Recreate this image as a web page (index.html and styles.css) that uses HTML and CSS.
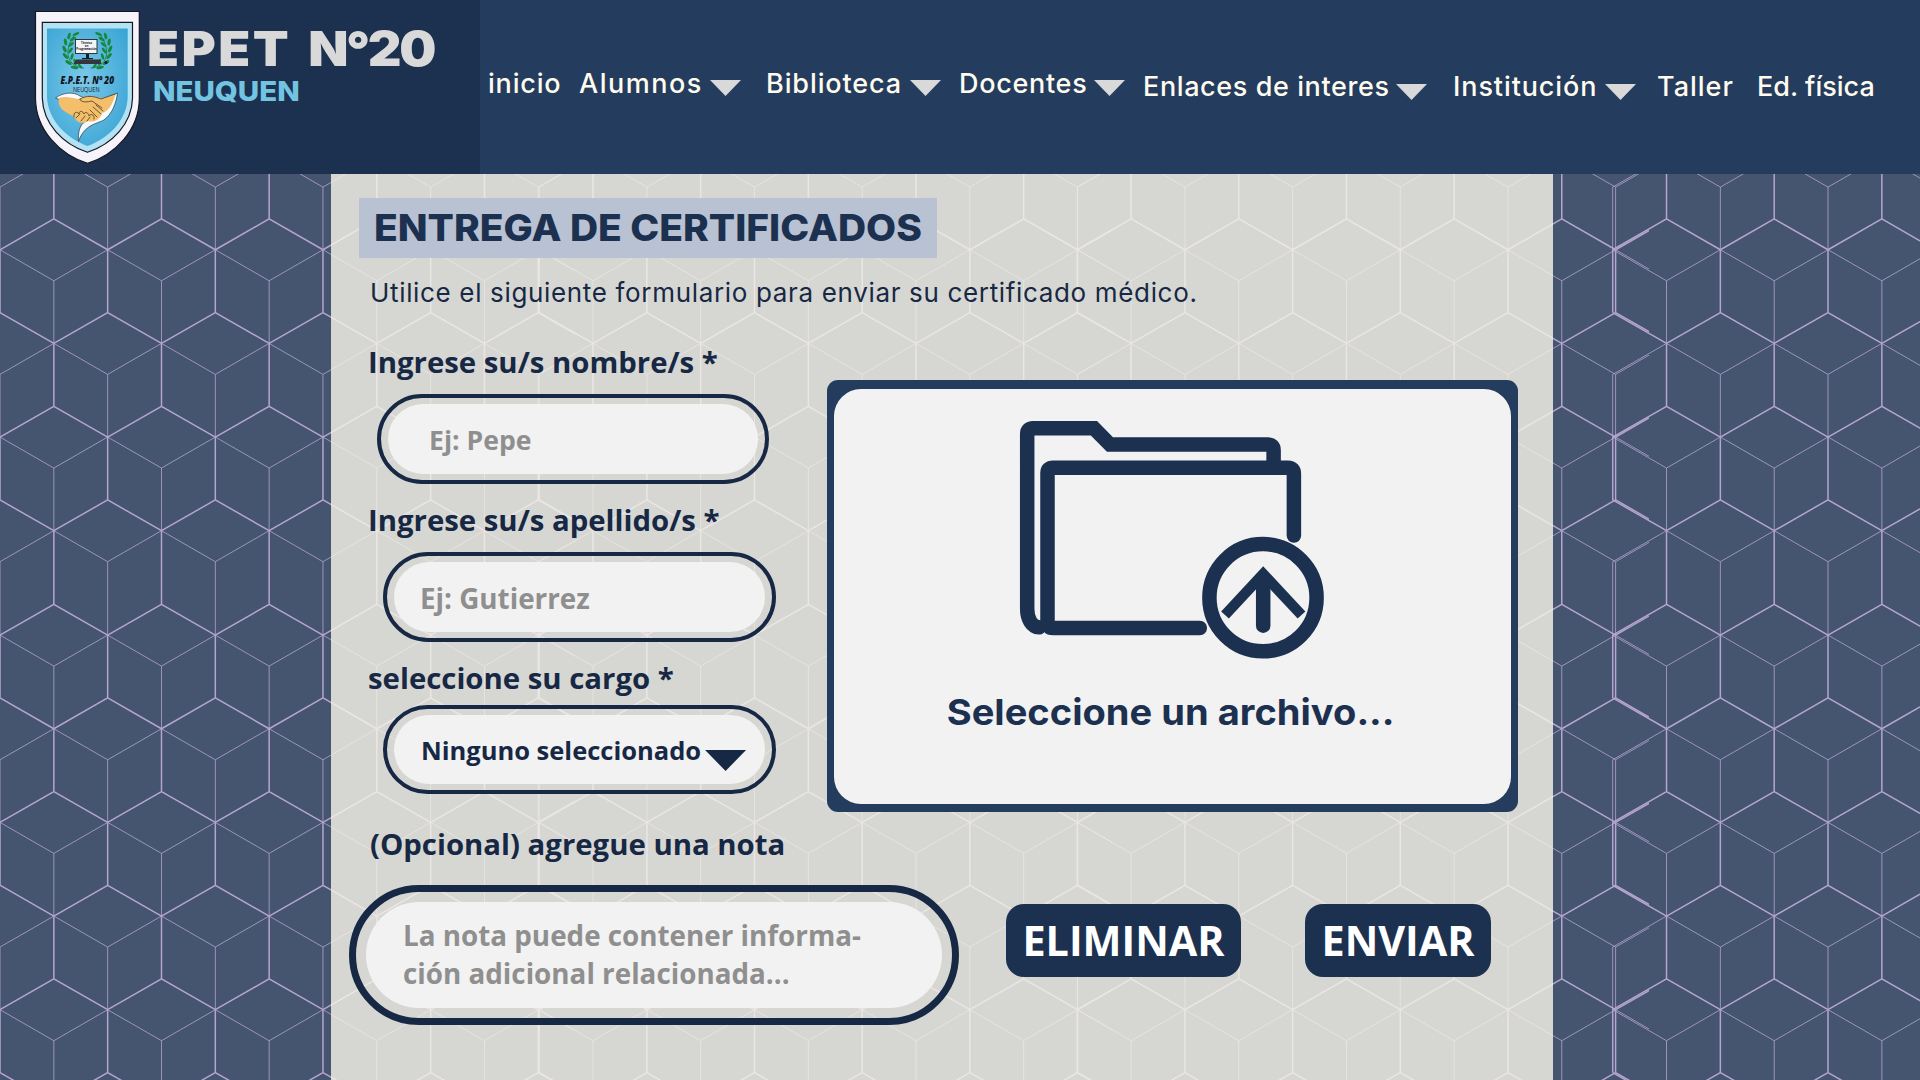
FILE: index.html
```html
<!DOCTYPE html>
<html lang="es">
<head>
<meta charset="utf-8">
<title>EPET N°20 Neuquén - Entrega de certificados</title>
<link rel="stylesheet" href="styles.css">
</head>
<body>
<svg class="backdrop" viewBox="0 0 1920 1080" aria-hidden="true"></svg>
<header class="header">
  <div class="brand">
    <svg class="crest" viewBox="30 6 115 162">
      <defs>
        <radialGradient id="sky" cx=".45" cy=".45" r=".7">
          <stop offset="0" stop-color="#7cc9ea"/><stop offset="1" stop-color="#37a3d3"/>
        </radialGradient>
        <g id="branch" fill="#158a3c">
          <path d="M84 68C68 67 62 52 75 34" fill="none" stroke="#1f7a3c" stroke-width=".9"/>
          <ellipse cx="76" cy="34" rx="3.6" ry="1.4" transform="rotate(-25 76 34)"/>
          <ellipse cx="69" cy="36" rx="3.4" ry="1.5" transform="rotate(-75 69 36)"/>
          <ellipse cx="73" cy="39" rx="3.4" ry="1.4" transform="rotate(-30 73 39)"/>
          <ellipse cx="65.500" cy="42" rx="3.600" ry="1.600" transform="rotate(80 65.500 42)"/>
          <ellipse cx="71" cy="44.500" rx="3.400" ry="1.400" transform="rotate(-40 71 44.500)"/>
          <ellipse cx="64.500" cy="49" rx="3.600" ry="1.600" transform="rotate(65 64.500 49)"/>
          <ellipse cx="70.500" cy="50.500" rx="3.400" ry="1.400" transform="rotate(-55 70.500 50.500)"/>
          <ellipse cx="65.500" cy="56" rx="3.700" ry="1.600" transform="rotate(50 65.500 56)"/>
          <ellipse cx="72" cy="56.500" rx="3.400" ry="1.400" transform="rotate(-75 72 56.500)"/>
          <ellipse cx="68.500" cy="62.500" rx="3.700" ry="1.600" transform="rotate(35 68.500 62.500)"/>
          <ellipse cx="75" cy="62" rx="3.400" ry="1.400" transform="rotate(75 75 62)"/>
          <ellipse cx="74.500" cy="67.500" rx="3.800" ry="1.600" transform="rotate(10 74.500 67.500)"/>
          <ellipse cx="80" cy="66" rx="3" ry="1.300" transform="rotate(50 80 66)"/>
        </g>
      </defs>
      <path d="M35.500 11.500H139.300V99C139 130 115 155 87.600 163.300C60 155 36 130 35.500 99Z" fill="#f6f3fb" stroke="#15181f" stroke-width="1.200"/>
      <path d="M42.300 22.300H132.500V98C132 124 112 144 87.500 152.300C63 144 43 124 42.300 98Z" fill="#b4e2f5" stroke="#15181f" stroke-width="1.200"/>
      <path d="M47 28.500H127.700V97C127 120 109 138 87.500 146C66 138 48 120 47 97Z" fill="url(#sky)"/>
      <use href="#branch"/>
      <use href="#branch" transform="translate(174.600 0) scale(-1 1)"/>
      <rect x="75.500" y="39.500" width="21.500" height="14" fill="#f4f4f6" stroke="#22252b" stroke-width=".9"/>
      <path d="M86 54h3v4h4v1.200H82V58h4Z" fill="#1c1c22"/>
      <path d="M76 59.500H100l1.500 4.500H73.500Z" fill="#35353d"/>
      <circle cx="106" cy="62.500" r="1.600" fill="#1c1c22"/>
      <g class="crest-screen"><text x="86.500" y="43.700">Técnico</text><text x="86.500" y="46.900">en</text><text x="86.500" y="50.100">Programación</text></g>
      <text class="crest-name" x="60.500" y="83.500" textLength="53.500" lengthAdjust="spacingAndGlyphs">E.P.E.T. Nº 20</text>
      <text class="crest-city" x="73" y="92" textLength="26.500" lengthAdjust="spacingAndGlyphs">NEUQUEN</text>
      <path d="M55.500 98C62 93 73 91 80 96L97 104 117.500 93C116 104 112 114 104 120C96 124 84 125 78.500 141.500C78 133 79 125 86 121L70 104Z" fill="#f7fbff" stroke="#2b3a44" stroke-width=".7"/>
      <path d="M59 98C66 95 74 99 80 99C87 94 94 97 102 98C106 98 110 96 115.500 94C113 104 108 112 102 113C100 120 94 123 88 121C83 125 76 122 74 117C67 112 57 110 59 98Z" fill="#f4bf6b"/>
      <path d="M80 99C87 95 93 96 101 99L115 94M80 99C80 103 88 102 92 101L102 108M74 117C73 112 77 111 79 114C79 110 83 111 84 114C85 111 89 113 89 116C91 113 95 115 94 119M76 118L80 114M81 121L85 116M87 121L90 117M93 107L101 114M90 110L97 117M96 105L103 111" fill="none" stroke="#4c371f" stroke-width=".8" stroke-linecap="round"/>
    </svg>
    <div class="brand-text">
      <div class="brand-name">EPET <span class="number">N°20</span></div>
      <div class="brand-city">NEUQUEN</div>
    </div>
  </div>
  <nav class="nav">
    <a class="item inicio">inicio</a>
    <a class="item alumnos">Alumnos<i class="caret"></i></a>
    <a class="item biblioteca">Biblioteca<i class="caret"></i></a>
    <a class="item docentes">Docentes<i class="caret"></i></a>
    <a class="item low enlaces">Enlaces de interes<i class="caret"></i></a>
    <a class="item low institucion">Institución<i class="caret"></i></a>
    <a class="item low taller">Taller</a>
    <a class="item low">Ed. física</a>
  </nav>
</header>
<main class="panel">
  <h1 class="title"><span>ENTREGA DE CERTIFICADOS</span></h1>
  <p class="intro">Utilice el siguiente formulario para enviar su certificado médico.</p>
  <div class="columns">
    <div class="fields">
      <div class="label">Ingrese su/s nombre/s *</div>
      <div class="field first"><div class="fill">Ej: Pepe</div></div>
      <div class="label second">Ingrese su/s apellido/s *</div>
      <div class="field surname"><div class="fill">Ej: Gutierrez</div></div>
      <div class="label third">seleccione su cargo *</div>
      <div class="field select"><div class="fill">Ninguno seleccionado<i class="arrow"></i></div></div>
    </div>
    <div class="upload">
      <div class="drop">
        <svg class="folder" viewBox="1015 416 314 248" fill="none" stroke="#1c3050" stroke-width="14.500">
          <path d="M1039 627.300C1032 627 1027.200 619 1027.200 609V434Q1027.200 428.300 1033 428.300H1094L1110 444.600H1268Q1273.600 444.600 1273.600 450V464" stroke-linecap="round"/>
          <path d="M1199.800 628H1053Q1047.500 628 1047.500 622V473Q1047.500 467.700 1053 467.700H1288Q1293.900 467.700 1293.900 474V535.500" stroke-linecap="round"/>
          <circle cx="1263" cy="597.700" r="53.600"/>
          <path d="M1263.200 578V625.700" stroke-linecap="round"/>
          <path d="M1225 615L1263.200 574L1301.500 615" stroke-width="10.500"/>
        </svg>
        <div class="drop-text">Seleccione un archivo...</div>
      </div>
    </div>
  </div>
  <div class="label note-label">(Opcional) agregue una nota</div>
  <div class="bottom">
    <div class="note"><div class="fill">La nota puede contener informa-<br>ción adicional relacionada...</div></div>
    <button class="btn remove">ELIMINAR</button>
    <button class="btn send">ENVIAR</button>
  </div>
</main>
<script src="script.js"></script>
</body>
</html>
```
FILE: styles.css
```css
* { box-sizing: border-box; }

body {
  margin: 0;
  width: 1920px;
  height: 1080px;
  overflow: hidden;
  position: relative;
  background: #45546f;
  font-family: "Open Sans", "Noto Sans", sans-serif;
  color: #172845;
}

.backdrop {
  position: absolute;
  inset: 0;
  width: 1920px;
  height: 1080px;
  fill: none;
  stroke: #b5a5cf;
}
.backdrop .strong { stroke-width: 1.5; }
.backdrop .soft { stroke-width: .8; }

/* header */
.header {
  position: relative;
  display: flex;
  height: 174px;
  background: #243c5e;
  font-family: Inter, sans-serif;
}
.brand {
  display: flex;
  width: 480px;
  padding: 6px 0 0 30px;
  background: #1c3050;
}
.crest { width: 115px; height: 162px; flex: none; }
.crest text { font-family: "Open Sans", sans-serif; fill: #11151c; }
.crest .crest-name { font-size: 11px; font-weight: 800; font-style: italic; }
.crest .crest-city { font-size: 7.500px; font-weight: 500; }
.crest .crest-screen text { font-size: 2.900px; font-weight: 700; text-anchor: middle; }
.brand-text { padding: 21px 0 0 2px; white-space: nowrap; }
.brand-name {
  height: 44px;
  color: #d9d9d9;
  font-size: 48px;
  line-height: 44px;
  font-weight: 900;
  letter-spacing: 2.200px;
  word-spacing: 4px;
  transform: scaleX(1.09);
  transform-origin: left;
}
.number { letter-spacing: -2.200px; }
.brand-city {
  margin: 6px 0 0 6px;
  color: #73c4e1;
  font-size: 27.500px;
  line-height: 28px;
  font-weight: 800;
  transform: scaleX(1.07);
  transform-origin: left;
}
.nav {
  display: grid;
  grid-template-columns: 91px 187px 193px 184px 310px 204px 100px 130px;
  padding: 64px 0 0 8px;
  color: #fffbee;
  font-size: 27px;
  line-height: 40px;
  font-weight: 500;
}
.item { display: flex; justify-content: space-between; white-space: nowrap; height: 40px; }
.low { margin-top: 3px; }
.inicio { letter-spacing: .8px; }
.alumnos { padding-right: 25px; letter-spacing: 1.500px; }
.biblioteca { padding-right: 18px; letter-spacing: .9px; }
.docentes { padding-right: 18px; letter-spacing: .7px; }
.enlaces { padding-right: 26px; letter-spacing: .6px; }
.institucion { padding-right: 21px; letter-spacing: .9px; }
.taller { letter-spacing: 1px; }
.caret {
  width: 31px;
  height: 16px;
  margin-top: 16px;
  background: #d9d9d9;
  clip-path: polygon(0 0, 100% 0, 50% 100%);
}
.low .caret { margin-top: 17px; }

/* content */
.panel {
  position: relative;
  width: 1222px;
  height: 906px;
  margin-left: 331px;
  padding: 24px 0 0 18px;
  background: rgba(246, 244, 232, .82);
}
.title {
  width: 578px;
  height: 60px;
  margin: 0 0 0 10px;
  padding-left: 15px;
  background: #b8c2d2;
  color: #1c3050;
  font: 800 36.500px/60px Inter, sans-serif;
  white-space: nowrap;
}
.title span {
  display: inline-block;
  transform: scaleX(1.067);
  transform-origin: left;
}
.intro {
  margin: 15px 0 0 21px;
  font: 400 26px/40px Inter, sans-serif;
  letter-spacing: .66px;
  white-space: nowrap;
}
.columns { display: grid; grid-template-columns: 477.500px 691px; padding-top: 29px; }
.label {
  height: 40px;
  margin-left: 19px;
  font-size: 29.350px;
  line-height: 40px;
  font-weight: 700;
  white-space: nowrap;
}
.second { margin-top: 16px; }
.third { margin-top: 16px; }
.field {
  width: 393px;
  height: 90px;
  margin: 12px 0 0 34px;
  padding: 6px 7px;
  border: 4px solid #172845;
  border-radius: 45px;
}
.field.first { width: 392px; margin-left: 28px; }
.field .fill {
  height: 70px;
  padding-left: 28px;
  border-radius: 35px;
  background: #f2f2f2;
  color: #8f8f8f;
  font-size: 26.600px;
  line-height: 72px;
  font-weight: 700;
  white-space: nowrap;
}
.field.first .fill { padding-left: 41px; }
.field.surname .fill { padding-left: 26px; font-size: 27.800px; }
.field.select { height: 89px; margin-top: 7px; }
.field.select .fill {
  display: flex;
  gap: 4px;
  height: 69px;
  padding-left: 27px;
  color: #172845;
  font-size: 25.500px;
  line-height: 71px;
}
.arrow {
  width: 41px;
  height: 21px;
  margin-top: 35px;
  background: #172845;
  clip-path: polygon(0 0, 100% 0, 50% 100%);
}
.upload {
  height: 432px;
  margin-top: 38px;
  padding: 8.500px 7px 8.500px 7.500px;
  border-radius: 11px;
  background: #243c5e;
}
.drop {
  display: flex;
  flex-direction: column;
  align-items: center;
  height: 415px;
  padding: 27.500px 1px 0 0;
  border-radius: 27px;
  background: #f2f2f2;
}
.folder { width: 314px; height: 248px; }
.drop-text {
  margin: 28px 2px 0 0;
  color: #1c3050;
  font: 700 36px/40px Inter, sans-serif;
  white-space: nowrap;
  transform: scaleX(1.058);
}
.note-label { margin-top: 12px; margin-left: 21px; }
.bottom { display: flex; margin-top: 21px; }
.note {
  width: 610px;
  height: 140px;
  padding: 10px;
  border: 7px solid #172845;
  border-radius: 70px;
}
.note .fill {
  height: 106px;
  padding: 14px 0 0 37px;
  border-radius: 53px;
  background: #f2f2f2;
  color: #8f8f8f;
  font-size: 27.800px;
  line-height: 38px;
  font-weight: 700;
  white-space: nowrap;
}
.btn {
  height: 73px;
  margin-top: 19px;
  padding: 0 0 1px;
  border: 0;
  border-radius: 18px;
  background: #1c3050;
  color: #fff;
  font: 700 41.300px/72px "Open Sans", sans-serif;
}
.remove { width: 235px; margin-left: 47px; }
.send { width: 186px; margin-left: 64px; }
```
FILE: script.js
```js
// Isometric cube wallpaper: repeated sheets of cubes that overlap a little at their edges.
const STEP = 53.83;
const ROW = 93.65;
const sheets = [
  { left: 0, right: 575 },
  { left: 539.2, right: 1113 },
  { left: 1077.3, right: 1649 },
  { left: 1612.7, right: 1920 },
];
const bands = [
  { top: 125.3, rows: 5, first: 0, lead: 63 },
  { top: 604.3, rows: 6, first: 1, lead: 73.6 },
];
const svg = document.querySelector('.backdrop');
const NS = 'http://www.w3.org/2000/svg';

sheets.forEach((sheet, s) => {
  let strong = '';
  let soft = '';
  bands.forEach((band, b) => {
    for (let r = 0; r < band.rows; r++) {
      const y = band.top + r * ROW;
      const odd = (r + band.first) % 2;
      for (let c = odd; c <= 12; c += 2) {
        const x = sheet.left + c * STEP;
        const rise = r === 0 ? band.lead : 63;
        const drop = b === 0 && r === band.rows - 1 ? 136 : 125;
        const start = c === 0 ? `M${x} ${y}` : `M${x - STEP} ${y + 30.8}L${x} ${y}`;
        strong += `${start}L${x + STEP} ${y + 30.8}M${x} ${y}V${y - rise}`;
        const low = c === 0 ? `M${x} ${y + 61.8}` : `M${x - STEP} ${y + 30.8}L${x} ${y + 61.8}`;
        soft += `${low}L${x + STEP} ${y + 30.8}M${x} ${y + 61.8}V${y + drop}`;
      }
    }
  });
  const clip = document.createElementNS(NS, 'clipPath');
  clip.id = `sheet${s}`;
  const box = document.createElementNS(NS, 'rect');
  box.setAttribute('x', sheet.left - 1);
  box.setAttribute('width', sheet.right - sheet.left + 1);
  box.setAttribute('height', 1080);
  clip.append(box);
  svg.append(clip);
  [['strong', strong], ['soft', soft]].forEach(([name, d]) => {
    const path = document.createElementNS(NS, 'path');
    path.setAttribute('class', name);
    path.setAttribute('d', d);
    path.setAttribute('clip-path', `url(#sheet${s})`);
    svg.append(path);
  });
});
```
